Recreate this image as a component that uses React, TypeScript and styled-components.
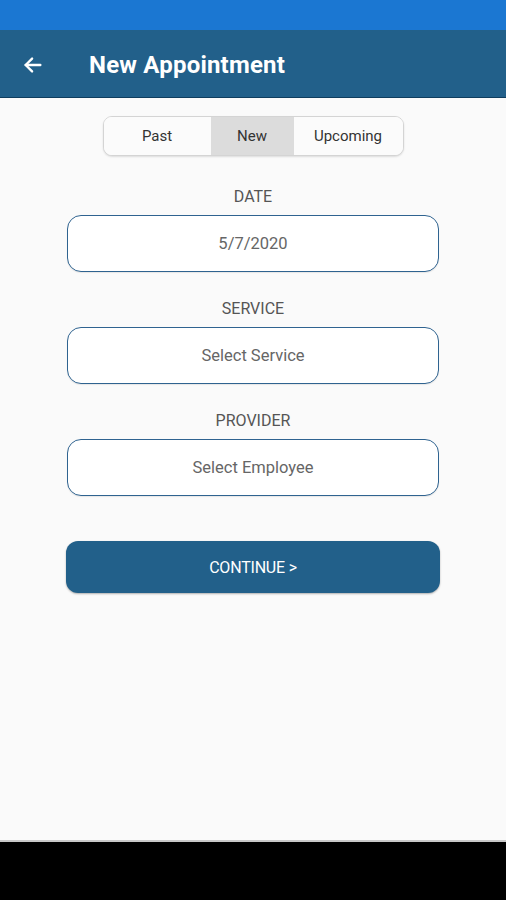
import React, { useState } from 'react';
import styled, { createGlobalStyle } from 'styled-components';

const GlobalStyle = createGlobalStyle`
  html, body {
    margin: 0;
    padding: 0;
    background: #000;
  }
  body {
    font-family: Roboto, "Noto Sans", "Liberation Sans", sans-serif;
  }
`;

const Screen = styled.div`
  width: 506px;
  height: 900px;
  display: flex;
  flex-direction: column;
  background: #000;
`;

const StatusBar = styled.div`
  height: 30px;
  background: #1b77d2;
`;

const AppBar = styled.header`
  height: 68px;
  display: flex;
  align-items: center;
  padding-top: 3px;
  box-sizing: border-box;
  background: #22608a;
  border-bottom: 1px solid #0f3d5e;
  color: #fff;
`;

const BackButton = styled.button`
  width: 70px;
  height: 100%;
  display: flex;
  align-items: center;
  padding: 0 0 0 22px;
  background: none;
  border: none;
  color: #fff;
  cursor: pointer;
`;

const Title = styled.h1`
  margin: 0 0 0 19px;
  font-size: 24px;
  font-weight: 700;
  letter-spacing: 0.2px;
`;

const Content = styled.main`
  height: 744px;
  background: #fafafa;
  display: flex;
  flex-direction: column;
  align-items: center;
  padding-top: 18px;
  box-sizing: border-box;
  border-bottom: 2px solid #c8c8c8;
`;

const Segments = styled.div`
  display: flex;
  height: 38px;
  border: 1px solid #d4d4d4;
  border-radius: 9px;
  overflow: hidden;
  background: #fff;
  box-shadow: 0 1px 2px rgba(0, 0, 0, 0.12);
`;

const Segment = styled.button<{ $active?: boolean; $w: number }>`
  width: ${(p) => p.$w}px;
  border: none;
  background: ${(p) => (p.$active ? '#dcdcdc' : '#fbfbfb')};
  font-family: inherit;
  font-size: 15px;
  color: #333;
  padding: 0;
  cursor: pointer;
`;

const Form = styled.div`
  width: 372px;
  display: flex;
  flex-direction: column;
  margin-top: 31px;
`;

const FieldLabel = styled.div`
  text-align: center;
  font-size: 16px;
  color: #555;
  margin-bottom: 9px;
  line-height: 19px;
`;

const FieldBox = styled.div`
  height: 55px;
  border: 1px solid #2f6390;
  border-radius: 14px;
  background: #fff;
  display: flex;
  align-items: center;
  justify-content: center;
  font-size: 16.5px;
  color: #666;
  margin-bottom: 27px;
  box-shadow: 0 1px 1px rgba(0, 0, 0, 0.08);
`;

const ContinueButton = styled.button`
  margin-top: 18px;
  height: 52px;
  width: 374px;
  align-self: center;
  border: none;
  border-radius: 12px;
  background: #22608a;
  color: #fff;
  font-family: inherit;
  font-size: 16px;
  letter-spacing: -0.2px;
  box-shadow: 0 1px 2px rgba(0, 0, 0, 0.3);
  cursor: pointer;
`;

const BottomBar = styled.div`
  flex: 1;
  background: #000;
`;

const tabs = [
  { name: 'Past', w: 107 },
  { name: 'New', w: 83 },
  { name: 'Upcoming', w: 109 },
];

const fields = [
  { label: 'DATE', value: '5/7/2020' },
  { label: 'SERVICE', value: 'Select Service' },
  { label: 'PROVIDER', value: 'Select Employee' },
];

export default function App() {
  const [tab, setTab] = useState('New');
  return (
    <Screen>
      <GlobalStyle />
      <StatusBar />
      <AppBar>
        <BackButton aria-label="back">
          <svg width="22" height="22" viewBox="0 0 24 24" fill="none" stroke="#fff" strokeWidth="2.6" strokeLinecap="round" strokeLinejoin="round">
            <path d="M20 12H4" />
            <path d="M11 5l-7 7 7 7" />
          </svg>
        </BackButton>
        <Title>New Appointment</Title>
      </AppBar>
      <Content>
        <Segments>
          {tabs.map((t) => (
            <Segment key={t.name} $w={t.w} $active={tab === t.name} onClick={() => setTab(t.name)}>
              {t.name}
            </Segment>
          ))}
        </Segments>
        <Form>
          {fields.map((f) => (
            <div key={f.label}>
              <FieldLabel>{f.label}</FieldLabel>
              <FieldBox>{f.value}</FieldBox>
            </div>
          ))}
          <ContinueButton>CONTINUE &gt;</ContinueButton>
        </Form>
      </Content>
      <BottomBar />
    </Screen>
  );
}
